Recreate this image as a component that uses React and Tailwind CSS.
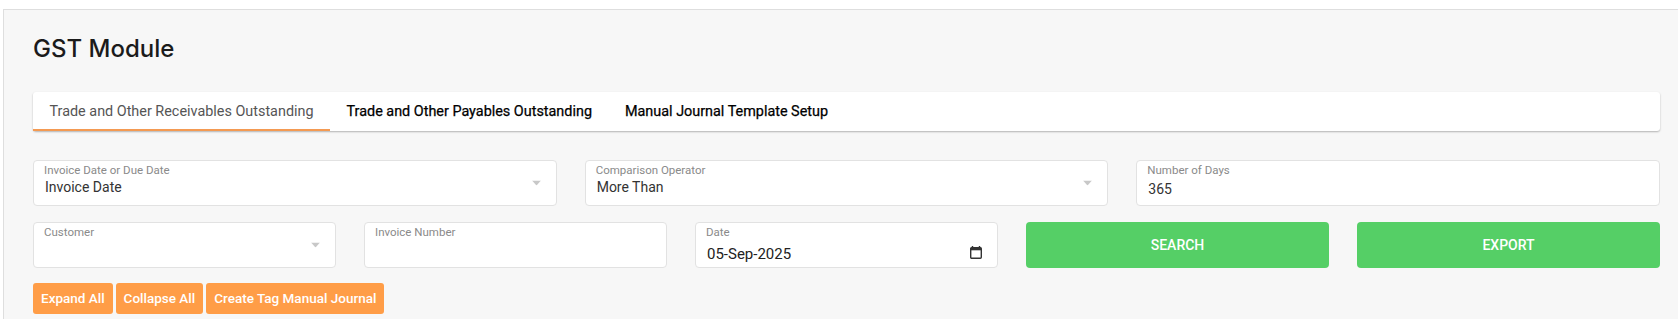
import { useState } from "react";

const tabs = [
    "Trade and Other Receivables Outstanding",
    "Trade and Other Payables Outstanding",
    "Manual Journal Template Setup",
];

function Caret() {
    return (
        <svg className="absolute right-[15px] top-1/2 -translate-y-1/2" width="9" height="5" viewBox="0 0 9 5">
            <path d="M0 0h9L4.5 5z" fill="#c8c8c8" />
        </svg>
    );
}

function CalendarIcon() {
    return (
        <svg className="absolute right-[15px] top-[23px]" width="12" height="13" viewBox="0 0 12 13">
            <path d="M2.5 0v2M9.5 0v2" stroke="#333" strokeWidth="1.4" />
            <rect x="0.7" y="1.7" width="10.6" height="10.6" rx="1" fill="none" stroke="#333" strokeWidth="1.4" />
            <rect x="0.7" y="1.7" width="10.6" height="2.6" fill="#333" />
        </svg>
    );
}

function Field({ label, value, select, date, input }) {
    return (
        <div className="relative h-[46px] rounded-[4px] border border-[#e2e2e2] bg-white pl-[10px] pt-[2px]">
            <div className="text-[11.5px] leading-[14px] text-[#8a8a8a]">{label}</div>
            {date ? (
                <div className="pl-[1px] pt-[5px] text-[15px] leading-[20px] text-[#222]">{value}</div>
            ) : (
                <div className={`pl-[1px] text-[14px] leading-[20px] text-[#333] ${input ? "pt-[2px]" : ""}`}>
                    {value}
                </div>
            )}
            {select && <Caret />}
            {date && <CalendarIcon />}
        </div>
    );
}

export default function App() {
    const [active, setActive] = useState(0);

    return (
        <div className="min-h-screen bg-white pl-[3px] pt-[9px] font-['Roboto',sans-serif]">
            <div className="h-[310px] border-l border-t border-[#dedede] bg-[#f7f7f7] pl-[29px] pr-[18px] pt-[23px]">
                <h1 className="font-['Inter',sans-serif] text-[24px] font-medium leading-[32px] text-[#1b1b1b]">
                    GST Module
                </h1>

                <div className="mt-[27px] flex h-[39px] rounded-[3px] bg-white shadow-[0_1px_2px_rgba(0,0,0,0.28)]">
                    {tabs.map((t, i) => (
                        <button
                            key={t}
                            onClick={() => setActive(i)}
                            className={`flex items-center border-b-2 px-[16.5px] pt-[2px] text-[14.4px] ${
                                active === i
                                    ? "border-[#f49a52] text-[#555]"
                                    : "border-transparent text-[#000] [-webkit-text-stroke:0.25px_#000]"
                            }`}
                        >
                            {t}
                        </button>
                    ))}
                </div>

                <div className="mt-[29px] grid grid-cols-3 gap-x-[28px]">
                    <Field label="Invoice Date or Due Date" value="Invoice Date" select />
                    <Field label="Comparison Operator" value="More Than" select />
                    <Field label="Number of Days" value="365" input />
                </div>

                <div className="mt-[16px] grid grid-cols-5 gap-x-[28px]">
                    <Field label="Customer" value="" select />
                    <Field label="Invoice Number" value="" input />
                    <Field label="Date" value="05-Sep-2025" date />
                    <button className="h-[46px] rounded-[4px] bg-[#55cf66] text-[14px] font-medium text-white">
                        SEARCH
                    </button>
                    <button className="h-[46px] rounded-[4px] bg-[#55cf66] text-[14px] font-medium text-white">
                        EXPORT
                    </button>
                </div>

                <div className="mt-[15px] flex gap-[3px]">
                    {["Expand All", "Collapse All", "Create Tag Manual Journal"].map((b) => (
                        <button
                            key={b}
                            className="h-[31px] rounded-[3px] bg-[#ff9d47] px-[8px] text-[13.5px] font-medium text-white"
                        >
                            {b}
                        </button>
                    ))}
                </div>
            </div>
        </div>
    );
}
